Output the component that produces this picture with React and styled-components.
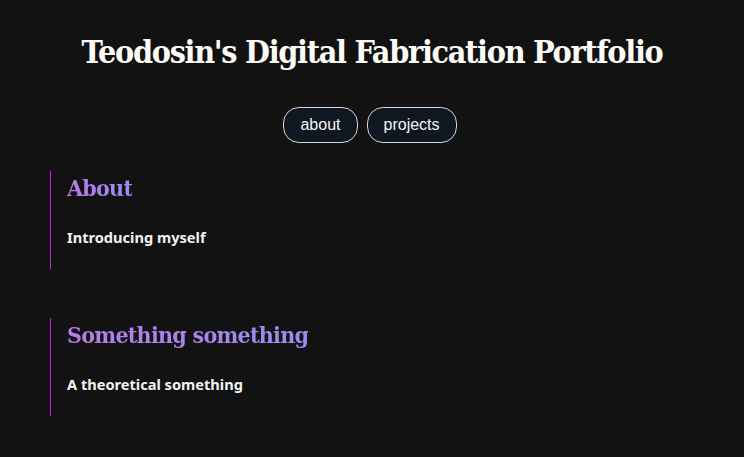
import React from 'react'
import styled, { createGlobalStyle } from 'styled-components'

const GlobalStyle = createGlobalStyle`
  html, body {
    margin: 0;
    background: #121212;
    color: #f5f5f5;
  }
`;
const Page = styled.div`
  width: 100%;
  min-height: 457px;
  padding-top: 32px;
  box-sizing: border-box;
`;
const Title = styled.h1`
  margin: 0;
  text-align: center;
  font-family: "DejaVu Serif Condensed", "DejaVu Serif", serif;
  font-stretch: condensed;
  font-weight: 700;
  font-size: 32px;
  line-height: 40px;
  letter-spacing: -1.3px;
  color: #fbfaf5;
`;
const Nav = styled.nav`
  display: flex;
  justify-content: center;
  gap: 9px;
  margin-top: 35px;
  padding-right: 4px;
`;
const NavButton = styled.a`
  display: flex;
  align-items: center;
  height: 36px;
  padding: 0 16px;
  box-sizing: border-box;
  border: 1px solid #d6d6d6;
  border-radius: 16px;
  background: #0f1720;
  color: #f3f4f6;
  font-family: "Liberation Sans", Arial, sans-serif;
  font-size: 16px;
  text-decoration: none;
`;
const Sections = styled.main`
  display: flex;
  flex-direction: column;
  gap: 49px;
  margin-top: 28px;
  padding-left: 50px;
`;
const Section = styled.section`
  height: 98px;
  border-left: 1px solid #c21ce0;
  padding-left: 16px;
  box-sizing: border-box;
`;
const Heading = styled.h2`
  margin: 0;
  padding-top: 1px;
  display: inline-block;
  font-family: "DejaVu Serif Condensed", "DejaVu Serif", serif;
  font-stretch: condensed;
  font-weight: 700;
  font-size: 23px;
  line-height: 32px;
  letter-spacing: -0.75px;
  background: linear-gradient(90deg, #b77ce6, #9a8cf2);
  -webkit-background-clip: text;
  background-clip: text;
  color: transparent;
`;
const Text = styled.p`
  margin: 23px 0 0;
  font-family: "Noto Sans", Lato, sans-serif;
  font-weight: 700;
  font-size: 14.6px;
  line-height: 20px;
  color: #f2f2f2;
`;

const sections = [
  { title: 'About', text: 'Introducing myself' },
  { title: 'Something something', text: 'A theoretical something' },
]

export default function App() {
  return (
    <Page>
      <GlobalStyle />
      <Title>Teodosin's Digital Fabrication Portfolio</Title>
      <Nav>
        <NavButton href="#about">about</NavButton>
        <NavButton href="#projects">projects</NavButton>
      </Nav>
      <Sections>
        {sections.map(s => (
          <Section key={s.title}>
            <Heading>{s.title}</Heading>
            <Text>{s.text}</Text>
          </Section>
        ))}
      </Sections>
    </Page>
  )
}
